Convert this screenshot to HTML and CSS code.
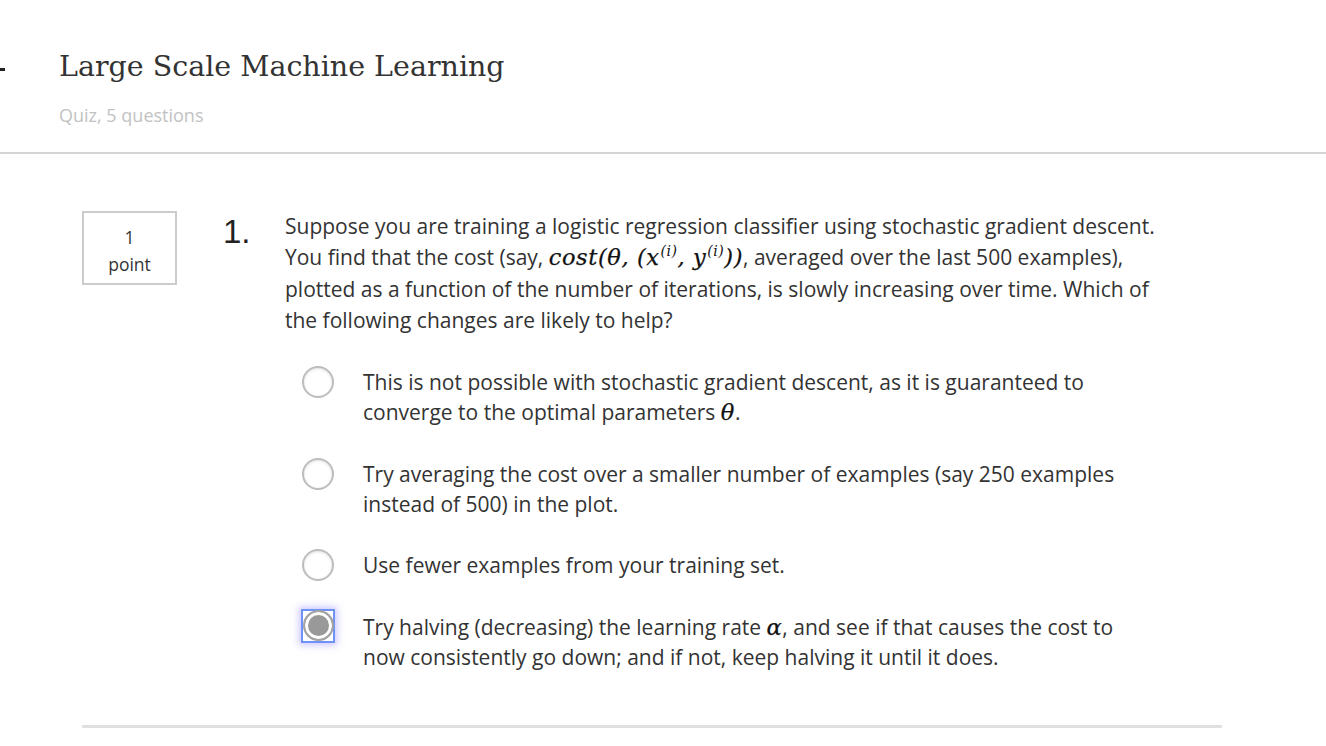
FILE: index.html
```html
<!DOCTYPE html>
<html>
<head>
<meta charset="utf-8">
<link rel="stylesheet" href="styles.css">
</head>
<body>
<header class="head">
  <span class="edge-mark"></span>
  <h1 class="title">Large Scale Machine Learning</h1>
  <div class="subtitle">Quiz, 5 questions</div>
</header>
<main class="quiz">
  <section class="question">
    <div class="points"><span>1</span><span>point</span></div>
    <div class="num">1.</div>
    <div class="body">
      <p class="prompt">Suppose you are training a logistic regression classifier using stochastic gradient descent. You find that the cost (say, <span class="math">cost(θ, (<i>x</i><sup>(<i>i</i>)</sup>, <i>y</i><sup>(<i>i</i>)</sup>))</span>, averaged over the last 500 examples), plotted as a function of the number of iterations, is slowly increasing over time. Which of the following changes are likely to help?</p>
      <ul class="options">
        <li class="option"><span class="radio-box"><span class="radio"></span></span><span class="text">This is not possible with stochastic gradient descent, as it is guaranteed to converge to the optimal parameters <span class="math">θ</span>.</span></li>
        <li class="option"><span class="radio-box"><span class="radio"></span></span><span class="text">Try averaging the cost over a smaller number of examples (say 250 examples instead of 500) in the plot.</span></li>
        <li class="option"><span class="radio-box"><span class="radio"></span></span><span class="text">Use fewer examples from your training set.</span></li>
        <li class="option"><span class="radio-box focused"><span class="radio checked"></span></span><span class="text">Try halving (decreasing) the learning rate <span class="math">α</span>, and see if that causes the cost to now consistently go down; and if not, keep halving it until it does.</span></li>
      </ul>
    </div>
  </section>
  <hr class="divider">
</main>
</body>
</html>
```
FILE: styles.css
```css
html, body {
  margin: 0;
  padding: 0;
  background: #fff;
}
body {
  font-family: "Open Sans", "Noto Sans", sans-serif;
  color: #333;
}
.head {
  position: relative;
  padding: 45px 0 0 59px;
  height: 107px;
  border-bottom: 2px solid #d4d4d4;
  box-sizing: content-box;
}
.edge-mark {
  position: absolute;
  left: 0;
  top: 68px;
  width: 5px;
  height: 3px;
  background: #222;
}
.title {
  margin: 0;
  font-family: "DejaVu Serif", "Liberation Serif", serif;
  font-weight: normal;
  font-size: 28.5px;
  line-height: 44px;
  color: #333;
}
.subtitle {
  margin-top: 14px;
  font-size: 18px;
  color: #c2c2c2;
  line-height: 24px;
}
.quiz {
  padding: 57px 0 0 82px;
  width: 1140px;
}
.question {
  display: flex;
  align-items: flex-start;
}
.points {
  width: 91px;
  border: 2px solid #ccc;
  display: flex;
  flex-direction: column;
  align-items: center;
  justify-content: center;
  font-size: 17.5px;
  line-height: 27px;
  color: #333;
  flex: none;
  padding-top: 5px;
  box-sizing: content-box;
  height: 65px;
}
.num {
  margin-left: 46px;
  width: 62px;
  flex: none;
  font-family: "Liberation Sans", Arial, sans-serif;
  font-size: 33px;
  line-height: 40px;
  color: #222;
  margin-top: 1px;
}
.body {
  flex: 1;
}
.prompt {
  margin: 0;
  font-size: 21px;
  line-height: 31.4px;
  color: #333;
  width: 885px;
}
.math {
  font-family: "DejaVu Serif", "Liberation Serif", serif;
  font-style: italic;
  font-size: 22.5px;
  color: #111;
  letter-spacing: 0.6px;
  -webkit-text-stroke: 0.25px #111;
}
.math sup {
  font-size: 14px;
  vertical-align: 9px;
  line-height: 0;
  margin-left: 1px;
  letter-spacing: 0.5px;
  -webkit-text-stroke: 0;
}
.options {
  list-style: none;
  margin: 30px 0 0 0;
  padding: 0 0 0 16px;
}
.option {
  display: flex;
  align-items: flex-start;
  margin-bottom: 32px;
}
.option:nth-child(2) {
  margin-bottom: 31px;
}
.option:last-child {
  margin-bottom: 0;
}
.radio-box {
  flex: none;
  width: 34px;
  height: 34px;
  box-sizing: border-box;
  display: flex;
  align-items: center;
  justify-content: center;
  margin-right: 28px;
  margin-top: -2px;
  margin-bottom: -4px;
}
.radio-box.focused {
  border: 2px solid #6f92f5;
  box-shadow: 0 0 7px 2px rgba(150,140,255,0.5);
  margin-top: -3px;
}
.radio {
  width: 28px;
  height: 28px;
  border: 2px solid #bdbdbd;
  border-radius: 50%;
  background: #fff;
  box-shadow: inset 0 1px 3px rgba(0,0,0,0.12);
  flex: none;
}
.radio.checked {
  width: 27px;
  height: 27px;
  background: #999;
  border-color: #a3a3a3;
  box-shadow: inset 0 0 0 3px #fff;
}
.text {
  font-size: 21px;
  line-height: 30px;
  color: #333;
  width: 780px;
}
.divider {
  margin: 53px 0 0 0;
  border: none;
  border-top: 3px solid #e0e0e0;
  height: 0;
  width: 1140px;
}
```
